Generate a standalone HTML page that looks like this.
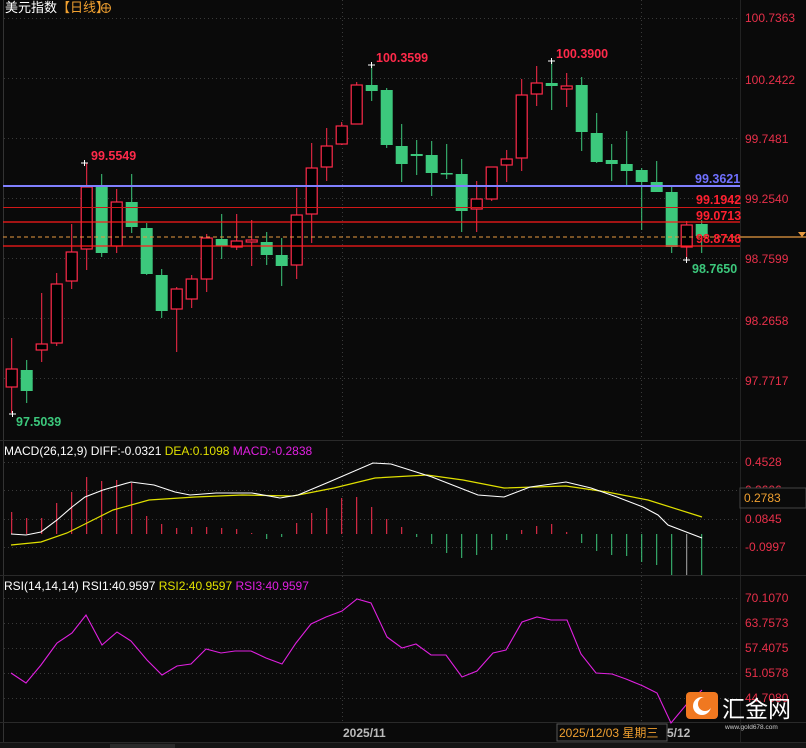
<!DOCTYPE html>
<html><head><meta charset="utf-8"><style>
html,body{margin:0;padding:0;background:#0a0a0a;width:806px;height:748px;overflow:hidden}
svg{display:block}
text{font-family:"Liberation Sans","Noto Sans CJK SC",sans-serif}
</style></head><body>
<svg id="s" width="806" height="748" xmlns="http://www.w3.org/2000/svg">
<rect width="806" height="748" fill="#0a0a0a"/>
<g id="grid" stroke="#3a3a3a" stroke-dasharray="1,3" stroke-width="1"></g>
<line x1="3.5" y1="0" x2="3.5" y2="742" stroke="#333"/>
<line x1="0" y1="440.5" x2="806" y2="440.5" stroke="#2a2a2a"/>
<line x1="0" y1="575.5" x2="806" y2="575.5" stroke="#2a2a2a"/>
<line x1="0" y1="722.5" x2="806" y2="722.5" stroke="#2a2a2a"/>
<line x1="0" y1="742.5" x2="806" y2="742.5" stroke="#2a2a2a"/>
<g id="c"></g>
<line x1="3" y1="186" x2="740" y2="186" stroke="#8080ff" stroke-width="2"/>
<line x1="3" y1="207.5" x2="740" y2="207.5" stroke="#d01818" stroke-width="1"/>
<line x1="3" y1="222" x2="740" y2="222" stroke="#ff1a1a" stroke-width="1.3"/>
<line x1="3" y1="237" x2="740" y2="237" stroke="#e89a40" stroke-width="1" stroke-dasharray="4,3"/>
<line x1="740" y1="237" x2="806" y2="237" stroke="#e89a40" stroke-width="1.2"/>
<polygon points="798,232 806,232 802,237" fill="#e89a40"/>
<line x1="3" y1="246" x2="740" y2="246" stroke="#ff1a1a" stroke-width="1.3"/>
<g font-size="12" fill="#e8304a">
<text x="745" y="22">100.7363</text><text x="745" y="84">100.2422</text><text x="745" y="143">99.7481</text>
<text x="745" y="203">99.2540</text><text x="745" y="263">98.7599</text><text x="745" y="325">98.2658</text><text x="745" y="385">97.7717</text>
</g>
<g font-size="12.5" font-weight="bold">
<text x="695" y="183" fill="#7070ff">99.3621</text>
<text x="696" y="204" fill="#ff2030">99.1942</text>
<text x="696" y="220" fill="#ff2030">99.0713</text>
<text x="696" y="243" fill="#ff2030">98.8746</text>
<text x="692" y="273" fill="#3cc87c">98.7650</text>
<text x="91" y="160" fill="#ff2a4a">99.5549</text>
<text x="376" y="62" fill="#ff2a4a">100.3599</text>
<text x="556" y="58" fill="#ff2a4a">100.3900</text>
<text x="16" y="426" fill="#3cc87c">97.5039</text>
</g>
<g stroke="#fff" stroke-width="1">
<path d="M81,163h7M84.5,160v6M368,65h7M371.5,62v6M548,61h7M551.5,58v6M683,260h7M686.5,257v6M9,414h7M12.5,411v6"/>
</g>
<text x="5" y="12" font-size="13" fill="#fff">美元指数<tspan fill="#f0a030">【日线】</tspan></text>
<circle cx="106" cy="8" r="4.5" fill="none" stroke="#f0a030"/><path d="M101.5,8h9M106,3.5v9" stroke="#f0a030"/>
<text x="4" y="455" font-size="12" fill="#fff">MACD(26,12,9) DIFF:-0.0321 <tspan fill="#e0e000">DEA:0.1098</tspan> <tspan fill="#e020e0">MACD:-0.2838</tspan></text>
<g font-size="12" fill="#e8304a"><text x="745" y="466">0.4528</text><text x="745" y="494">0.2606</text><text x="745" y="523">0.0845</text><text x="745" y="551">-0.0997</text></g>
<rect x="740" y="488" width="66" height="20" fill="#0a0a0a" stroke="#444"/>
<text x="744" y="502" font-size="12" fill="#f0a030">0.2783</text>
<g id="h"></g>
<polyline fill="none" stroke="#e0e000" stroke-width="1.2" points="11,545 41,542 67,533 87,523 113,510 149,500 195,497 242,495 293,496 334,488 375,478 427,475 463,480 504,488 566,486 607,492 648,500 702,517"/>
<polyline fill="none" stroke="#fff" stroke-width="1.1" points="11,534 26,535 41,532 57,520 72,507 85,497 103,490 131,482 154,485 175,492 190,495 216,493 252,493 280,498 298,495 329,482 373,463 391,464 432,477 478,495 504,497 530,487 566,482 591,488 617,497 643,507 658,515 668,525 702,538"/>
<text x="4" y="590" font-size="12" fill="#fff">RSI(14,14,14) RSI1:40.9597 <tspan fill="#e0e000">RSI2:40.9597</tspan> <tspan fill="#e020e0">RSI3:40.9597</tspan></text>
<g font-size="12" fill="#e8304a"><text x="745" y="602">70.1070</text><text x="745" y="627">63.7573</text><text x="745" y="652">57.4075</text><text x="745" y="677">51.0578</text><text x="745" y="702">44.7080</text></g>
<polyline fill="none" stroke="#e020e0" stroke-width="1.1" points="11,673 26,683 41,665 57,643 72,633 86,615 102,645 117,632 131,641 147,660 162,675 177,666 191,664 206,649 221,653 235,651 251,651 266,658 282,664 296,643 311,624 326,617 342,611 357,599 371,603 387,637 402,648 416,644 431,655 446,655 462,677 477,671 493,653 506,650 522,622 537,617 551,620 567,620 581,654 596,673 612,674 626,679 643,686 657,693 671,723 686,705 702,690"/>
<rect x="686" y="692" width="32" height="27" rx="4" fill="#f07820"/>
<circle cx="702" cy="706" r="9" fill="#fff"/><circle cx="705" cy="704" r="7" fill="#f07820"/>
<text x="722" y="717" font-size="23" fill="#fff" font-family="Noto Sans CJK SC,sans-serif">汇金网</text>
<text x="725" y="729" font-size="6.5" fill="#ccc">www.gold678.com</text>
<text x="343" y="737" font-size="12" fill="#bbb" font-weight="bold">2025/11</text>
<rect x="557" y="724" width="110" height="17" fill="#0a0a0a" stroke="#555"/>
<text x="559" y="737" font-size="12" fill="#f0a030">2025/12/03 星期三</text>
<text x="667" y="737" font-size="12" fill="#bbb" font-weight="bold">5/12</text>
<rect x="0" y="743" width="806" height="5" fill="#151515"/>
<rect x="110" y="744" width="65" height="4" fill="#2a2a2a"/>
</svg>
<script>
var NS="http://www.w3.org/2000/svg";
function el(p,t,a){var e=document.createElementNS(NS,t);for(var k in a)e.setAttribute(k,a[k]);p.appendChild(e);return e;}
var g=document.getElementById('grid');
[18,78,138,198,258,318,378].forEach(function(y){el(g,'line',{x1:4,y1:y+.5,x2:740,y2:y+.5});});
[462,490,519,547,598,623,648,673,698].forEach(function(y){el(g,'line',{x1:4,y1:y+.5,x2:740,y2:y+.5});});
[342,641].forEach(function(x){el(g,'line',{x1:x+.5,y1:0,x2:x+.5,y2:722});});
el(g,'line',{x1:740.5,y1:0,x2:740.5,y2:742,'stroke-dasharray':'none',stroke:'#222'});
var C=[[1,369,387,338,413],[0,370,391,360,403],[1,344,350,293,362],[1,284,343,273,346],[1,252,281,224,289],[1,187,249,163,270],[0,187,253,174,257],[1,202,246,189,253],[0,202,227,174,233],[0,228,274,223,275],[0,275,311,269,318],[1,289,309,287,352],[1,279,299,275,308],[1,238,279,234,292],[0,239,246,214,259],[1,241,247,214,250],[1,240,242,220,266],[0,242,255,232,265],[0,255,266,238,286],[1,215,265,188,279],[1,168,214,143,243],[1,146,167,128,181],[1,126,144,122,145],[1,85,124,82,124],[0,85,91,65,101],[0,90,145,88,148],[0,146,164,124,182],[0,154,156,140,175],[0,155,173,141,196],[0,173,174,144,179],[0,174,211,159,232],[1,199,209,181,232],[1,167,199,167,201],[1,159,165,150,182],[1,95,158,79,171],[1,83,94,66,106],[0,83,86,60,110],[1,86,89,73,107],[0,85,132,77,151],[0,133,162,113,163],[0,160,164,144,181],[0,164,171,131,185],[0,170,182,168,230],[0,182,192,161,192],[0,192,247,187,253],[1,225,247,221,259],[0,224,236,220,253]];
var cg=document.getElementById('c'),R='#ff2a4a',G='#3cc87c';
C.forEach(function(c,i){var x=11.7+15*i,col=c[0]?R:G;
el(cg,'line',{x1:x,y1:c[3],x2:x,y2:c[4],stroke:col,'stroke-width':1});
var h=Math.max(c[2]-c[1],1.5);
if(c[0])el(cg,'rect',{x:x-5.5,y:c[1],width:11,height:h,fill:'#000',stroke:col,'stroke-width':1.2});
else el(cg,'rect',{x:x-6,y:c[1],width:12,height:h,fill:col});});
var H=[512,518,518,503,492,477,481,480,483,516,524,528,527,527,528,529,533,539,537,523,513,508,498,497,507,519,527,537,544,553,558,555,550,540,530,526,524,532,543,551,555,556,562,565,575,575,575];
var hg=document.getElementById('h');
H.forEach(function(y,i){var x=11.7+15*i;var col=y<534?'#ff3050':'#3cc87c';if(i==45)col='#aaa';
el(hg,'line',{x1:x,y1:534,x2:x,y2:y,stroke:col,'stroke-width':1});});
</script>
</body></html>
